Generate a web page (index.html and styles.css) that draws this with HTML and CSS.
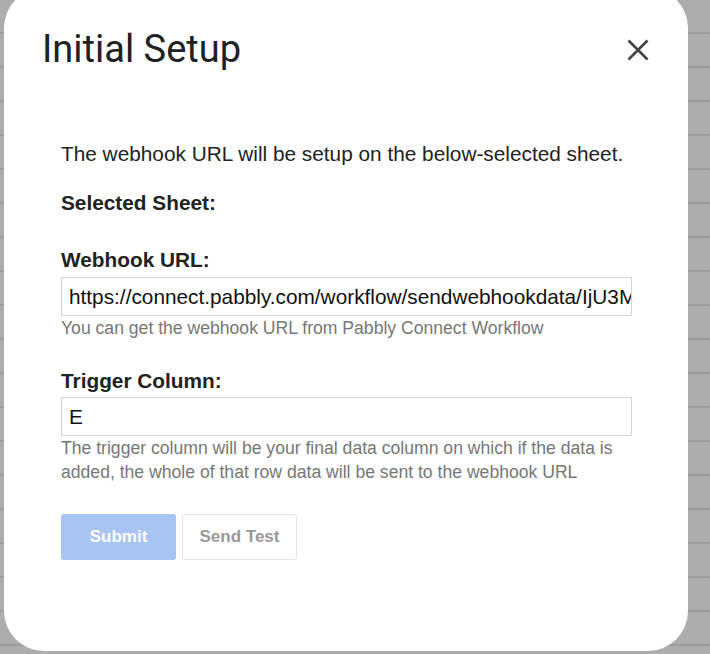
FILE: index.html
```html
<!DOCTYPE html>
<html>
<head>
<meta charset="utf-8">
<link rel="stylesheet" href="styles.css">
</head>
<body>
<div class="dialog">
  <div class="header">
    <h1 class="title">Initial Setup</h1>
    <svg class="close" width="24" height="24" viewBox="0 0 24 24"><path d="M2.5 2.5 L21.5 21.5 M21.5 2.5 L2.5 21.5" stroke="#444" stroke-width="2.6" fill="none"/></svg>
  </div>
  <div class="content">
    <p class="intro">The webhook URL will be setup on the below-selected sheet.</p>
    <p class="label sheet">Selected Sheet:</p>
    <p class="label webhook">Webhook URL:</p>
    <div class="input">https://connect.pabbly.com/workflow/sendwebhookdata/IjU3MDYwNTZiMDYzMDA0M2Q1MjZkNTUzNSI_3D_pc</div>
    <p class="help">You can get the webhook URL from Pabbly Connect Workflow</p>
    <p class="label trigger">Trigger Column:</p>
    <div class="input">E</div>
    <p class="help">The trigger column will be your final data column on which if the data is added, the whole of that row data will be sent to the webhook URL</p>
    <div class="buttons">
      <div class="btn submit">Submit</div>
      <div class="btn test">Send Test</div>
    </div>
  </div>
</div>
</body>
</html>
```
FILE: styles.css
```css
html, body {
  margin: 0;
  padding: 0;
}
body {
  height: 654px;
  overflow: hidden;
  background-color: #adadad;
  background-image: repeating-linear-gradient(to bottom, transparent 0 32px, #9c9c9c 32px 34px);
  font-family: "Liberation Sans", Arial, sans-serif;
}
.dialog {
  margin: -12px 0 0 4px;
  width: 684px;
  height: 663px;
  box-sizing: border-box;
  background: #fff;
  border-radius: 40px;
  padding-top: 37px;
}
.header {
  display: flex;
  justify-content: space-between;
  align-items: flex-start;
  padding: 0 38px 0 38px;
}
.title {
  margin: 0;
  font-family: Roboto, "Noto Sans", sans-serif;
  font-weight: 400;
  font-size: 38px;
  line-height: 48px;
  color: #202124;
}
.close {
  margin-top: 13px;
  display: block;
}
.content {
  padding: 0 56px 0 57px;
}
p {
  margin: 0;
}
.intro {
  margin-top: 69px;
  font-size: 20.8px;
  line-height: 24px;
  color: #222;
}
.label {
  font-size: 20.8px;
  line-height: 24px;
  font-weight: 700;
  color: #222;
}
.sheet {
  margin-top: 25px;
}
.webhook {
  margin-top: 33px;
}
.trigger {
  margin-top: 29px;
}
.input {
  margin-top: 5px;
  height: 39px;
  box-sizing: border-box;
  border: 1px solid #d4d4d4;
  padding: 0 0 0 7px;
  font-size: 20.8px;
  line-height: 37px;
  color: #111;
  white-space: nowrap;
  overflow: hidden;
}
.trigger + .input {
  margin-top: 4px;
}
.help {
  font-size: 17.6px;
  line-height: 24px;
  color: #777;
}
.buttons {
  margin-top: 30px;
  display: flex;
  gap: 6px;
}
.btn {
  width: 115px;
  height: 46px;
  box-sizing: border-box;
  border-radius: 3px;
  display: flex;
  align-items: center;
  justify-content: center;
  font-size: 17px;
  font-weight: 700;
}
.submit {
  background: #a8c4f2;
  color: #fff;
}
.test {
  border: 1px solid #e4e4e4;
  color: #999;
}
```
